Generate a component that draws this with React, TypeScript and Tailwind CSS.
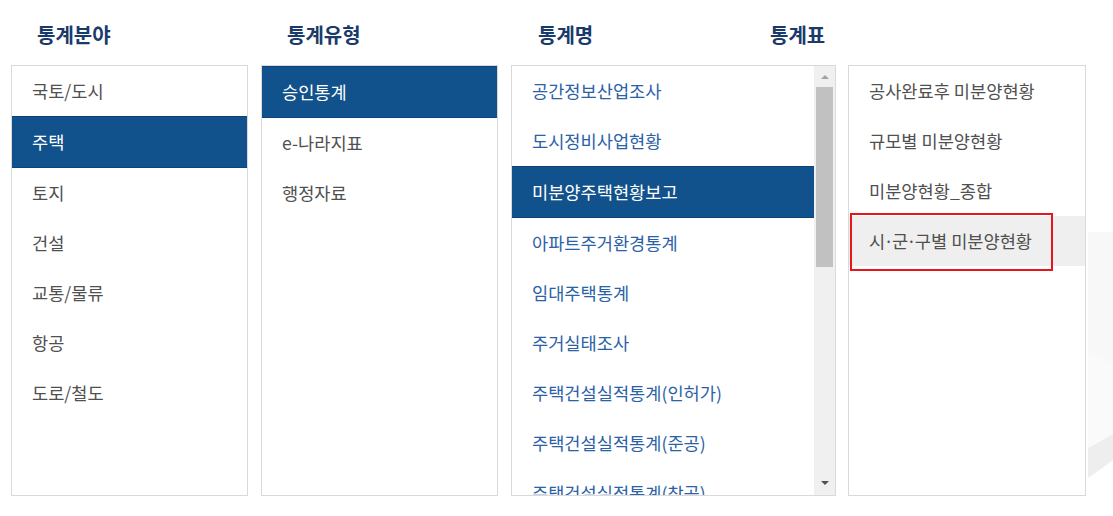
import React from "react";

const FONT = { fontFamily: '"Noto Sans CJK KR", "Noto Sans", sans-serif' };

type Item = { label: React.ReactNode; key: string; selected?: boolean; hover?: boolean };

function Row({ item, color }: { item: Item; color: string }) {
  if (item.selected) {
    return (
      <div className="flex h-[52px] shrink-0 items-center whitespace-nowrap border-y border-[#0d4477] bg-[#12528c] pl-[20px] text-[17.6px] text-white">
        {item.label}
      </div>
    );
  }
  return (
    <div
      className={`flex h-[50px] shrink-0 items-center whitespace-nowrap pl-[20px] text-[17.6px] ${color} ${
        item.hover ? "bg-[#efefef]" : ""
      }`}
    >
      {item.label}
    </div>
  );
}

const Dot = () => (
  <span style={{ fontFamily: '"Noto Sans", sans-serif' }} className="mx-[1px]">
    ·
  </span>
);

const mk = (label: string, extra: Partial<Item> = {}): Item => ({ label, key: label, ...extra });

export default function App() {
  const col1: Item[] = [
    mk("국토/도시"),
    mk("주택", { selected: true }),
    mk("토지"),
    mk("건설"),
    mk("교통/물류"),
    mk("항공"),
    mk("도로/철도"),
  ];
  const col2: Item[] = [mk("승인통계", { selected: true }), mk("e-나라지표"), mk("행정자료")];
  const col3: Item[] = [
    mk("공간정보산업조사"),
    mk("도시정비사업현황"),
    mk("미분양주택현황보고", { selected: true }),
    mk("아파트주거환경통계"),
    mk("임대주택통계"),
    mk("주거실태조사"),
    mk("주택건설실적통계(인허가)"),
    mk("주택건설실적통계(준공)"),
    mk("주택건설실적통계(착공)"),
  ];
  const col4: Item[] = [
    mk("공사완료후 미분양현황"),
    mk("규모별 미분양현황"),
    mk("미분양현황_종합"),
    {
      key: "sgg",
      hover: true,
      label: (
        <span>
          시<Dot />군<Dot />구별 미분양현황
        </span>
      ),
    },
  ];

  const title = "text-[20px] font-bold leading-[26px] text-[#1a3a6b]";

  return (
    <div className="relative h-[516px] w-[1113px] overflow-hidden bg-white" style={FONT}>
      {/* faint background decoration at right */}
      <svg className="absolute left-[1086px] top-0" width="27" height="516" viewBox="0 0 27 516">
        <rect x="2" y="232" width="25" height="216" fill="#f8f8f8" />
        <path d="M2 352 Q14 356 27 364 L27 436 Q14 442 2 448 Z" fill="#fafafa" />
        <path d="M2 448 Q14 442 27 434 L27 460 Q14 470 2 478 Z" fill="#eeeeee" />
      </svg>

      <div className="flex flex-col pl-[11px]">
        {/* headers */}
        <div className="flex h-[65px] gap-[13px] pt-[22px]">
          <div className="w-[237px] pl-[26px]">
            <span className={title}>통계분야</span>
          </div>
          <div className="w-[237px] pl-[26px]">
            <span className={title}>통계유형</span>
          </div>
          <div className="flex w-[325px] pl-[27px]">
            <span className={`${title} inline-block w-[232px]`}>통계명</span>
            <span className={title}>통계표</span>
          </div>
        </div>

        {/* boxes */}
        <div className="flex h-[431px]">
          <div className="flex w-[237px] flex-col overflow-hidden border border-[#d9d9d9]">
            {col1.map((it) => (
              <Row key={it.key} item={it} color="text-[#505050]" />
            ))}
          </div>
          <div className="ml-[13px] flex w-[237px] flex-col overflow-hidden border border-[#d9d9d9]">
            {col2.map((it) => (
              <Row key={it.key} item={it} color="text-[#505050]" />
            ))}
          </div>
          <div className="ml-[13px] flex w-[325px] overflow-hidden border border-[#d9d9d9]">
            <div className="flex w-[302px] flex-col overflow-hidden">
              {col3.map((it) => (
                <Row key={it.key} item={it} color="text-[#2b62a6]" />
              ))}
            </div>
            {/* scrollbar */}
            <div className="flex w-[21px] flex-col items-center bg-[#f0f0f0]">
              <div className="flex h-[21px] w-full items-center justify-center">
                <div className="h-0 w-0 border-x-[4px] border-b-[4px] border-x-transparent border-b-[#a3a3a3]" />
              </div>
              <div className="h-[180px] w-[17px] bg-[#c1c1c1]" />
              <div className="flex-1" />
              <div className="flex h-[21px] w-full items-center justify-center pb-[4px]">
                <div className="h-0 w-0 border-x-[4px] border-t-[4px] border-x-transparent border-t-[#505050]" />
              </div>
            </div>
          </div>
          <div className="relative ml-[12px] flex w-[238px] flex-col border border-[#d9d9d9]">
            {col4.map((it) => (
              <Row key={it.key} item={it} color="text-[#505050]" />
            ))}
            <div className="absolute left-[1px] top-[147px] h-[58px] w-[203px] border-2 border-[#e5161d]" />
          </div>
        </div>
      </div>
    </div>
  );
}
